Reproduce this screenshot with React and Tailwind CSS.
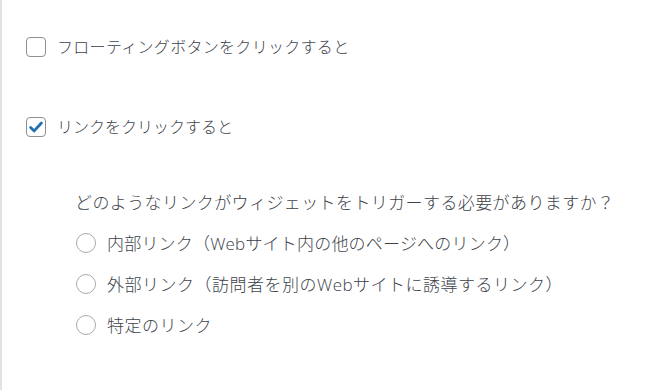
import React from "react";

const font = "font-['Open_Sans','Noto_Sans_CJK_JP',sans-serif]";

function Checkbox({ checked }) {
  return (
    <div className="w-[20px] h-[20px] shrink-0 rounded-[4px] border border-[#8c8f94] bg-white flex items-center justify-center">
      {checked && (
        <svg width="16" height="16" viewBox="0 0 16 16">
          <path d="M2.6 8.4 L6.2 11.9 L13.4 4" fill="none" stroke="#2271b1" strokeWidth="2.8" strokeLinecap="round" strokeLinejoin="round" />
        </svg>
      )}
    </div>
  );
}

function Radio() {
  return <div className="w-[20px] h-[20px] shrink-0 rounded-full border border-[#a7aaad] bg-white" />;
}

export default function App() {
  return (
    <div className={`w-[647px] h-[390px] bg-white border-l-2 border-[#e2e2e2] text-[#3c434a] ${font}`}>
      <div className="pl-[24px] pt-[37px]">
        <div className="flex items-center gap-[11px] h-[20px]">
          <Checkbox />
          <span className="text-[16px] font-light leading-none tracking-[0.3px]">フローティングボタンをクリックすると</span>
        </div>
        <div className="flex items-center gap-[11px] h-[20px] mt-[60px]">
          <Checkbox checked />
          <span className="text-[16px] font-light leading-none">リンクをクリックすると</span>
        </div>
        <div className="pl-[49px] mt-[56px]">
          <div className="text-[17px] font-light leading-[20px] h-[20px] tracking-[0.4px]">どのようなリンクがウィジェットをトリガーする必要がありますか？</div>
          <div className="flex flex-col gap-[21px] mt-[20px] pl-[1px]">
            <div className="flex items-center gap-[11px] h-[20px]">
              <Radio />
              <span className="text-[17px] font-light leading-none tracking-[0.2px]">内部リンク（Webサイト内の他のページへのリンク）</span>
            </div>
            <div className="flex items-center gap-[11px] h-[20px]">
              <Radio />
              <span className="text-[17px] font-light leading-none tracking-[0.5px]">外部リンク（訪問者を別のWebサイトに誘導するリンク）</span>
            </div>
            <div className="flex items-center gap-[11px] h-[20px]">
              <Radio />
              <span className="text-[17px] font-light leading-none tracking-[0.5px]">特定のリンク</span>
            </div>
          </div>
        </div>
      </div>
    </div>
  );
}
